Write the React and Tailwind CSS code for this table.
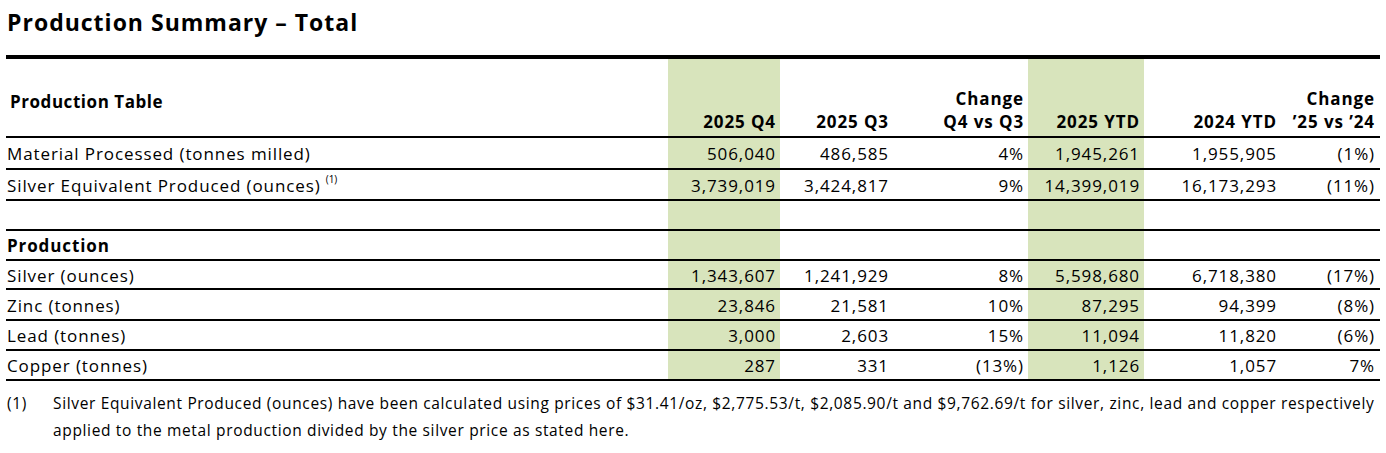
const font = { fontFamily: "'Open Sans', Lato, 'Liberation Sans', sans-serif" };

const rows = [
  { label: "Material Processed (tonnes milled)", v: ["506,040", "486,585", "4%", "1,945,261", "1,955,905", "(1%)"], h: "h-[32px]" },
  { label: "Silver Equivalent Produced (ounces)", sup: "(1)", v: ["3,739,019", "3,424,817", "9%", "14,399,019", "16,173,293", "(11%)"], h: "h-[31px]" },
  { label: "", v: ["", "", "", "", "", ""], h: "h-[30px]" },
  { label: "Production", bold: true, v: ["", "", "", "", "", ""], h: "h-[30px]" },
  { label: "Silver (ounces)", v: ["1,343,607", "1,241,929", "8%", "5,598,680", "6,718,380", "(17%)"], h: "h-[29px]" },
  { label: "Zinc (tonnes)", v: ["23,846", "21,581", "10%", "87,295", "94,399", "(8%)"], h: "h-[31px]" },
  { label: "Lead (tonnes)", v: ["3,000", "2,603", "15%", "11,094", "11,820", "(6%)"], h: "h-[30px]" },
  { label: "Copper (tonnes)", v: ["287", "331", "(13%)", "1,126", "1,057", "7%"], h: "h-[30px]" },
];

const grid = "grid grid-cols-[662px_112px_113px_135px_116px_137px_96px]";
const green = [true, false, false, true, false, false];

export default function App() {
  return (
    <div className="bg-white w-[1386px] h-[453px] text-black px-[6px]" style={font}>
      {/* title */}
      <div className="h-[55px] pt-[6px] pl-[1px] text-[23px] font-bold leading-[32px] tracking-[1px]">
        Production Summary – Total
      </div>
      <div className="h-[4px] bg-black"></div>

      {/* header row */}
      <div className={`${grid} h-[79px] border-b-2 border-black text-[17px] font-bold leading-[23px] tracking-[0.9px]`}>
        <div className="pl-[4px] pt-[31px] tracking-[0.55px]">Production Table</div>
        <div className="bg-[#d8e4bc] flex items-end justify-end pr-[4px] pb-[3px]">2025 Q4</div>
        <div className="flex items-end justify-end pr-[4px] pb-[3px]">2025 Q3</div>
        <div className="flex flex-col items-end justify-end pr-[4px] pb-[3px] text-right">
          <span>Change</span>
          <span>Q4 vs Q3</span>
        </div>
        <div className="bg-[#d8e4bc] flex items-end justify-end pr-[4px] pb-[3px]">2025 YTD</div>
        <div className="flex items-end justify-end pr-[4px] pb-[3px]">2024 YTD</div>
        <div className="flex flex-col items-end justify-end pr-[2px] pb-[3px] text-right">
          <span>Change</span>
          <span>’25 vs ’24</span>
        </div>
      </div>

      {/* body rows */}
      {rows.map((r, i) => (
        <div key={i} className={`${grid} ${r.h} border-b-2 border-black text-[17px] leading-[23px] tracking-[0.9px]`}>
          <div className={`flex items-center pl-[1px] pt-[1px] ${r.bold ? "font-bold" : ""}`}>
            {r.label}
            {r.sup && <sup className="text-[10px] ml-[5px] -top-[6px] tracking-normal">{r.sup}</sup>}
          </div>
          {r.v.map((x, j) => (
            <div
              key={j}
              className={`flex items-center justify-end pt-[1px] ${j === 5 ? "pr-[2px]" : "pr-[4px]"} ${green[j] ? "bg-[#d8e4bc]" : ""}`}
            >
              {x}
            </div>
          ))}
        </div>
      ))}

      {/* footnote */}
      <div className="flex pt-[9px] text-[15.5px] leading-[27px] pl-[1px] tracking-[0.65px]">
        <div className="w-[46px] shrink-0">(1)</div>
        <div>
          Silver Equivalent Produced (ounces) have been calculated using prices of $31.41/oz, $2,775.53/t, $2,085.90/t and $9,762.69/t for silver, zinc, lead and copper respectively applied to the metal production divided by the silver price as stated here.
        </div>
      </div>
    </div>
  );
}
